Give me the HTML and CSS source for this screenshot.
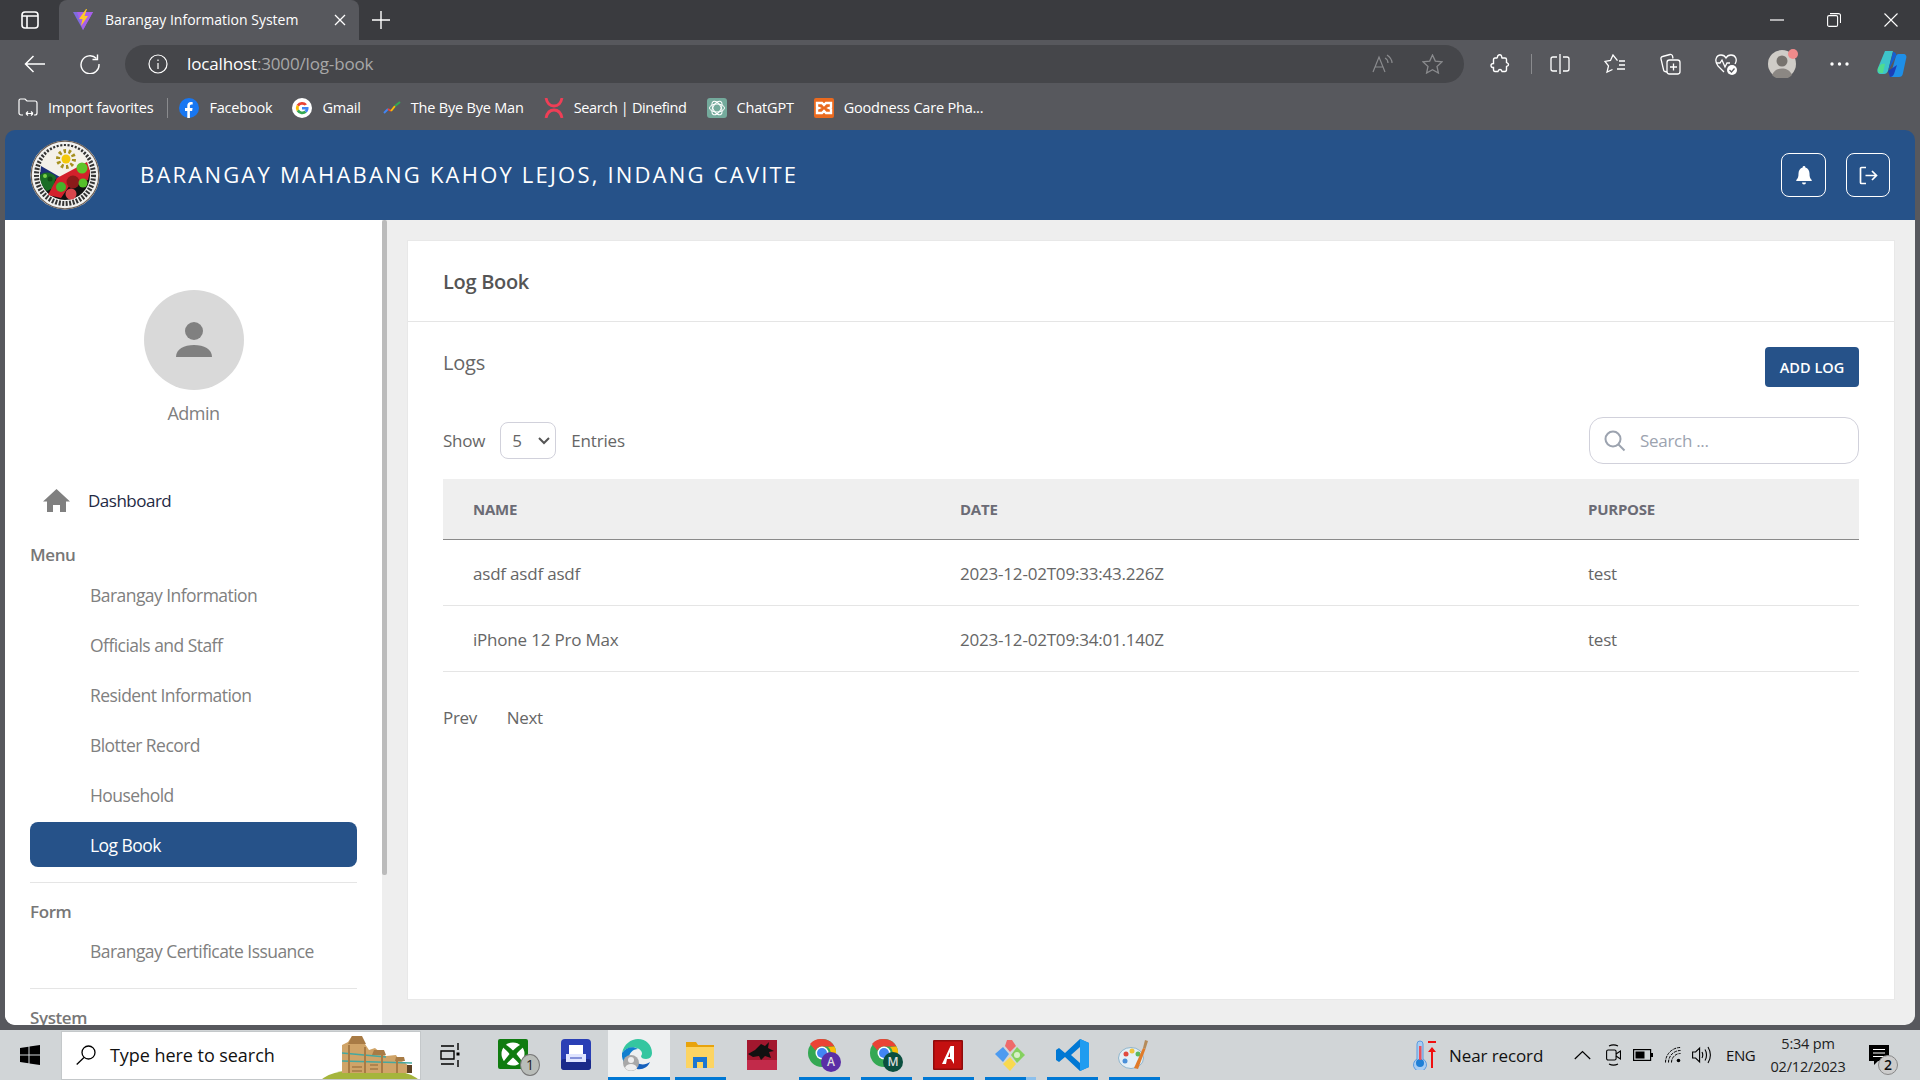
FILE: index.html
```html
<!DOCTYPE html>
<html lang="en">
<head>
<meta charset="utf-8">
<title>Barangay Information System</title>
<link rel="stylesheet" href="styles.css">
</head>
<body>
<div class="screen">
  <div class="browser">
    <div class="tabbar">
      <svg class="tab-side" width="18" height="18" viewBox="0 0 18 18" fill="none" stroke="#fff" stroke-width="1.6"><rect x="1" y="1" width="16" height="16" rx="3"/><path d="M1 5h16M6 5v12"/></svg>
      <div class="tab">
        <svg width="20" height="22" viewBox="0 0 20 22"><path d="M0 3h20L10 21z" fill="#7f6be0"/><path d="M4 3h16L10 21z" fill="#a95fe8"/><path d="M13 0L6 10h3.500L8 17l7-10h-3.500L14 0z" fill="#ffc828"/></svg>
        <span class="tab-title">Barangay Information System</span>
        <svg class="tab-x" width="12" height="12" viewBox="0 0 12 12" stroke="#fff" stroke-width="1.3"><path d="M1 1l10 10M11 1L1 11"/></svg>
      </div>
      <svg class="tab-plus" width="18" height="18" viewBox="0 0 18 18" stroke="#fff" stroke-width="1.4"><path d="M9 0v18M0 9h18"/></svg>
      <div class="win">
        <svg width="14" height="14" viewBox="0 0 14 14" stroke="#fff" stroke-width="1.2"><path d="M0 7h14"/></svg>
        <svg width="14" height="14" viewBox="0 0 14 14" fill="none" stroke="#fff" stroke-width="1.1"><rect x=".6" y="2.6" width="10" height="10.8" rx="1.5"/><path d="M3 .6h8.500a2 2 0 0 1 2 2V10"/></svg>
        <svg width="14" height="14" viewBox="0 0 14 14" stroke="#fff" stroke-width="1.1"><path d="M.5.5l13 13M13.500.5l-13 13"/></svg>
      </div>
    </div>
    <div class="toolbar">
      <svg class="tb-back" width="22" height="18" viewBox="0 0 22 18" fill="none" stroke="#fff" stroke-width="1.5"><path d="M21 9H1.500M9.500 1L1.500 9l8 8"/></svg>
      <svg class="tb-reload" width="20" height="20" viewBox="0 0 20 20" fill="none" stroke="#fff" stroke-width="1.4"><path d="M16.500 4.500A9 9 0 1 0 19 10"/><path d="M17.500 .5v5h-5"/></svg>
      <div class="address">
        <svg class="addr-info" width="20" height="20" viewBox="0 0 20 20" fill="none" stroke="#fff" stroke-width="1.2"><circle cx="10" cy="10" r="9"/><path d="M10 9v6M10 5.500v1.500"/></svg>
        <span class="url"><span class="url-host">localhost</span>:3000/log-book</span>
        <svg class="addr-read" width="21" height="20" viewBox="0 0 21 20" fill="none" stroke="#8a8b8e" stroke-width="1.2"><path d="M1 18L7 3l6 15M3 13h8M13 4c2 1 3 3 3 5M15 1c3 2 5 4 5 8"/></svg>
        <svg width="21" height="20" viewBox="0 0 21 20" fill="none" stroke="#8a8b8e" stroke-width="1.3"><path d="M10.500 1l2.800 6.100 6.700.8-5 4.500 1.400 6.600-5.900-3.300L4.600 19 6 12.400 1 7.900l6.700-.8z"/></svg>
      </div>
      <div class="tools">
        <svg width="20" height="20" viewBox="0 0 20 20" fill="none" stroke="#fff" stroke-width="1.400"><path d="M8 1.500c1-1 3-1 3.500.5.300 1 .1 1.500.5 2h3c1 0 1.500.5 1.500 1.500v3c.5.500 2 .2 2 2s-1.500 1.500-2 2v3c0 1-.5 2-1.500 2h-3c-.5-.5 0-2-2-2s-1.500 1.500-2 2H5c-1 0-1.500-1-1.500-2v-2c-1 0-2.500 0-2.500-2s1.500-2 2.500-2V6c0-1 .5-2 1.500-2h2c.5 0 .3-1.500 1-2.500z"/></svg>
        <span class="tool-sep"></span>
        <svg width="20" height="20" viewBox="0 0 20 20" fill="none" stroke="#fff" stroke-width="1.300"><path d="M10 0v20M7 3H3a2 2 0 0 0-2 2v10a2 2 0 0 0 2 2h4M13 3h4a2 2 0 0 1 2 2v10a2 2 0 0 1-2 2h-4"/></svg>
        <svg width="22" height="20" viewBox="0 0 22 20" fill="none" stroke="#fff" stroke-width="1.300"><path d="M13.500 6.600L9 1 6.500 6.500 1 7.400l3.500 4.400L3 18l5.500-2.500M15 7h6M15 11h6M13 15h8"/></svg>
        <svg width="21" height="22" viewBox="0 0 21 22" fill="none" stroke="#fff" stroke-width="1.300"><path d="M7 19l-2-.5a2 2 0 0 1-1.500-2L1 6a2 2 0 0 1 1.500-2.500L10 1.500a2 2 0 0 1 2.500 1.500l.5 2.500"/><rect x="7" y="7" width="13" height="14" rx="2.500"/><path d="M13.500 10.500v7M10 14h7"/></svg>
        <svg width="22" height="22" viewBox="0 0 22 22" fill="none" stroke="#fff" stroke-width="1.300"><path d="M3 13C-1 8 1 2 6 2c2 0 4 1 5 3 1-2 3-3 5-3 5 0 6.500 5 4 9M3 13l6 6"/><path d="M1 10h4l2-3 3 7 2-4h3"/><circle cx="17" cy="17" r="5" fill="#fff" stroke="none"/><path d="M14.500 17l2 2 3-3.500" stroke="#57585d"/></svg>
        <div class="tool-avatar"><svg width="28" height="28" viewBox="0 0 28 28"><circle cx="14" cy="14" r="14" fill="#cfccc7"/><circle cx="14" cy="11" r="5.500" fill="#77736e"/><path d="M4 25c2-5 6-6.500 10-6.500S22 20 24 25a14 14 0 0 1-20 0z" fill="#8b8783"/></svg><span class="tool-dot"></span></div>
        <svg width="19" height="4" viewBox="0 0 19 4" fill="#fff"><circle cx="2" cy="2" r="1.700"/><circle cx="9.500" cy="2" r="1.700"/><circle cx="17" cy="2" r="1.700"/></svg>
        <svg class="copilot" width="30" height="28" viewBox="0 0 30 28"><path d="M8 1h8l-5 20c-1 2-2 3-4 3H4C1 24 0 22 .5 19z" fill="#3ec4c9"/><path d="M2 17c1-3 4-4 6-3l-2 9H4c-3 0-4-3-2-6z" fill="#4fdc8f"/><path d="M22 27h-9l6-21c1-2 2-2 4-2h3c3 0 4 2 3 5l-3 14c-.5 3-2 4-4 4z" fill="#1e8fe8"/><path d="M11 21l8-15c1-2-1-4-3-4l-5 19z" fill="#155fd0"/><path d="M13 27c2 0 3-1 4-3l3-9-9 6z" fill="#1b3fb8"/></svg>
      </div>
    </div>
    <div class="bookmarks">
      <div class="bm"><svg width="20" height="19" viewBox="0 0 20 19" fill="none" stroke="#fff" stroke-width="1.200"><path d="M5 17H3a2 2 0 0 1-2-2V2.500A1.500 1.500 0 0 1 2.500 1H7l2 2h8a2 2 0 0 1 2 2v10a2 2 0 0 1-2 2h-1M8 15.500h7M8 15.500l2-2M8 15.500l2 2M15 15.500l-2-2M15 15.500l-2 2"/></svg><span>Import favorites</span></div>
      <span class="bm-sep"></span>
      <div class="bm"><svg width="20" height="20" viewBox="0 0 20 20"><circle cx="10" cy="10" r="10" fill="#1877f2"/><path d="M8.300 20v-7H6v-3h2.300V7.800c0-2.500 1.400-3.800 3.600-3.800.9 0 1.800.2 1.800.2v2.400h-1.200c-1.200 0-1.600.8-1.600 1.500V10h2.700l-.5 3h-2.200v7z" fill="#fff"/></svg><span>Facebook</span></div>
      <div class="bm"><svg width="20" height="20" viewBox="0 0 20 20"><circle cx="10" cy="10" r="10" fill="#fff"/><path d="M15 6.200A6.500 6.500 0 0 0 4.700 6.800L7 8.600a3.700 3.700 0 0 1 5.700-1z" fill="#ea4335"/><path d="M4.700 6.800a6.500 6.500 0 0 0 0 6.400L7 11.400a3.700 3.700 0 0 1 0-2.800z" fill="#fbbc05"/><path d="M4.700 13.200a6.500 6.500 0 0 0 10 1.300l-2.200-1.700A3.700 3.700 0 0 1 7 11.400z" fill="#34a853"/><path d="M16.500 9H10v2.600h3.600a3 3 0 0 1-1.100 1.200l2.200 1.700C16 13.300 16.800 11.300 16.500 9z" fill="#4285f4"/></svg><span>Gmail</span></div>
      <div class="bm bm-trend"><svg width="18" height="16" viewBox="0 0 18 16" fill="none" stroke-width="2"><path d="M1 13l4-4" stroke="#4285f4"/><path d="M5 9l3 2" stroke="#ea4335"/><path d="M8 11l4-5" stroke="#fbbc05"/><path d="M12 6l5-4" stroke="#34a853"/></svg><span>The Bye Bye Man</span></div>
      <div class="bm"><svg width="20" height="20" viewBox="0 0 20 20" fill="none" stroke="#f03e56" stroke-width="2.800"><path d="M2 0c1 5 4 8 8 8s7-3 8-8M2 20c1-5 4-8 8-8s7 3 8 8"/></svg><span class="bm-tight">Search | Dinefind</span></div>
      <div class="bm"><svg width="20" height="20" viewBox="0 0 20 20"><rect width="20" height="20" rx="3" fill="#74aa9c"/><g fill="none" stroke="#fff" stroke-width="1"><ellipse cx="10" cy="10" rx="7.500" ry="4"/><ellipse cx="10" cy="10" rx="7.500" ry="4" transform="rotate(60 10 10)"/><ellipse cx="10" cy="10" rx="7.500" ry="4" transform="rotate(120 10 10)"/></g></svg><span>ChatGPT</span></div>
      <div class="bm"><svg width="20" height="20" viewBox="0 0 20 20"><rect width="20" height="20" rx="2" fill="#ea6a1f"/><path d="M3 5h5l2 2 2-2h5v4l-2 1 2 1v4h-5l-2-2-2 2H3v-4l2-1-2-1z" fill="none" stroke="#fff" stroke-width="2.400"/></svg><span>Goodness Care Pha...</span></div>
    </div>
  </div>

  <div class="page">
    <header class="topbar">
      <svg class="logo" width="70" height="70" viewBox="0 0 70 70">
        <circle cx="35" cy="35" r="34.500" fill="#f2f2f0"/>
        <circle cx="35" cy="35" r="33.800" fill="none" stroke="#6d5f55" stroke-width="1.200"/>
        <circle cx="35" cy="35" r="28.500" fill="none" stroke="#333" stroke-width="5" stroke-dasharray="2 1.500"/>
        <circle cx="35" cy="35" r="25" fill="#111"/>
        <path d="M10 32A25 25 0 0 1 60 30L30 40l-8-6z" fill="#f4f1ea"/>
        <path d="M11 26l19 11-9 4.500-11-4z" fill="#1d2f78"/>
        <path d="M10 35c5-4 12-3 16 2l-3 11-6 3c-5-4-7-10-7-16z" fill="#1a6d24"/>
        <path d="M18 55l9-17 30-16 3 9-2 9-18 5-9 13z" fill="#d3202b"/>
        <circle cx="36" cy="19" r="4.500" fill="#f4c90b"/>
        <circle cx="36" cy="19" r="8" fill="none" stroke="#a5901f" stroke-width="4" stroke-dasharray="2.500 2.500"/>
        <circle cx="52" cy="28" r="5.500" fill="#5fc42b"/>
        <circle cx="43" cy="42" r="6.500" fill="#8b1a1a"/>
        <circle cx="31" cy="47" r="5" fill="#45b52a"/>
        <circle cx="53" cy="43" r="4.500" fill="#55c02a"/>
        <circle cx="41" cy="54" r="5.500" fill="#d8454c"/>
        <circle cx="20" cy="39" r="2.500" fill="#0f4a16"/>
        <circle cx="15" cy="36" r="2" fill="#7bd04a"/>
      </svg>
      <h1 class="brand">BARANGAY MAHABANG KAHOY LEJOS, INDANG CAVITE</h1>
      <div class="top-actions">
        <button class="icon-btn"><svg width="16" height="19" viewBox="0 0 16 19" fill="#fff"><path d="M8 0a1.300 1.300 0 0 1 1.300 1.500C12 2.200 13.500 4.500 13.500 7.500c0 3.500.6 5 2.200 6.500v1H.3v-1c1.600-1.500 2.200-3 2.200-6.500 0-3 1.500-5.300 4.200-6A1.300 1.300 0 0 1 8 0zM6 16.500h4a2 2 0 0 1-4 0z"/></svg></button>
        <button class="icon-btn icon-btn-out"><svg width="19" height="19" viewBox="0 0 19 19" fill="none" stroke="#fff" stroke-width="1.700"><path d="M7 1.500H2.500a1 1 0 0 0-1 1v14a1 1 0 0 0 1 1H7M6.500 9.500h11M13 5l4.500 4.500L13 14"/></svg></button>
      </div>
    </header>
    <div class="workspace">
      <aside class="sidebar">
        <div class="side-scroll">
          <div class="profile">
            <div class="avatar"><svg width="36" height="36" viewBox="0 0 36 36" fill="#808080"><circle cx="18" cy="9" r="9"/><path d="M0 35c0-8 8-12 18-12s18 4 18 12z"/></svg></div>
            <div class="admin">Admin</div>
          </div>
          <a class="dash"><svg width="27" height="23" viewBox="0 0 27 23" fill="#808080"><path d="M13.500 0L27 12.500h-4V23h-6v-7h-7v7H4V12.500H0z"/></svg><span>Dashboard</span></a>
          <div class="sec-label">Menu</div>
          <ul class="side-list">
            <li class="side-item">Barangay Information</li>
            <li class="side-item">Officials and Staff</li>
            <li class="side-item">Resident Information</li>
            <li class="side-item">Blotter Record</li>
            <li class="side-item">Household</li>
            <li class="side-item side-item-active">Log Book</li>
          </ul>
          <hr class="side-rule">
          <div class="sec-label">Form</div>
          <ul class="side-list">
            <li class="side-item side-item-up">Barangay Certificate Issuance</li>
          </ul>
          <hr class="side-rule side-rule-tight">
          <div class="sec-label">System</div>
        </div>
        <div class="scrollbar"><span class="scroll-thumb"></span></div>
      </aside>
      <main class="main">
        <section class="card">
          <div class="card-head"><h2 class="card-title">Log Book</h2></div>
          <div class="card-body">
            <div class="logs-row">
              <h3 class="logs-title">Logs</h3>
              <button class="add-btn">ADD LOG</button>
            </div>
            <div class="filter-row">
              <div class="entries">
                <span>Show</span>
                <div class="select"><span>5</span><svg width="12" height="8" viewBox="0 0 12 8" fill="none" stroke="#555" stroke-width="2"><path d="M1 1l5 5 5-5"/></svg></div>
                <span>Entries</span>
              </div>
              <div class="search">
                <svg width="22" height="22" viewBox="0 0 22 22" fill="none" stroke="#9ca3af" stroke-width="2"><circle cx="9" cy="9" r="7.500"/><path d="M14.500 14.500l6 6"/></svg>
                <span>Search ...</span>
              </div>
            </div>
            <table class="logs">
              <thead><tr><th class="col-name">NAME</th><th class="col-date">DATE</th><th>PURPOSE</th></tr></thead>
              <tbody>
                <tr><td>asdf asdf asdf</td><td>2023-12-02T09:33:43.226Z</td><td>test</td></tr>
                <tr><td>iPhone 12 Pro Max</td><td>2023-12-02T09:34:01.140Z</td><td>test</td></tr>
              </tbody>
            </table>
            <div class="pager"><span>Prev</span><span>Next</span></div>
          </div>
        </section>
      </main>
    </div>
  </div>

  <footer class="taskbar">
    <svg class="start" width="20" height="20" viewBox="0 0 20 20" fill="#000"><path d="M0 3l8.500-1.200v7.700H0zM9.500 1.600L20 0v9.500H9.500zM0 10.500h8.500v7.700L0 17zM9.500 10.500H20V20L9.500 18.400z"/></svg>
    <div class="task-search">
      <svg class="glass" width="20" height="20" viewBox="0 0 20 20" fill="none" stroke="#000" stroke-width="1.300"><circle cx="12.500" cy="7.500" r="6.500"/><path d="M8 12.500L.7 19.500"/></svg>
      <span class="task-search-text">Type here to search</span>
      <svg class="scene" width="98" height="48" viewBox="0 0 98 48">
        <ellipse cx="48" cy="52" rx="50" ry="14" fill="#a5b53c"/>
        <path d="M20 42V14l6-3 4-6 10 2 3 6 4 6 6-2 6 5 5 3 10-1 3 5 5 2 6 5v6z" fill="#d0a468"/>
        <path d="M30 5h10l4 8H26zM52 19h10l2 5H50zM74 26h8l1 4H73z" fill="#a87b45"/>
        <path d="M20 22l44 4M20 30l70 2" stroke="#45a8a0" stroke-width="1.500"/>
        <path d="M27 14v28M43 16v26M60 24v18M75 30v12" stroke="#a87b45" stroke-width="2"/>
        <path d="M30 36h10M30 40h10M48 34h8M48 38h8" stroke="#8e6534"/>
        <rect x="85" y="34" width="5" height="8" fill="#5e4224"/>
      </svg>
    </div>
    <svg class="taskview" width="20" height="26" viewBox="0 0 20 26" fill="none" stroke="#000" stroke-width="1.400"><path d="M1 4h13M1 22h13M1 9h13v8H1zM18 1v7M18 18v7"/><rect x="16.500" y="10.500" width="3" height="3" fill="#000" stroke="none"/></svg>
    <div class="apps">
      <div class="app"><svg width="32" height="32" viewBox="0 0 32 32"><rect width="30" height="30" rx="2" fill="#107c10"/><circle cx="15" cy="15" r="11.500" fill="#fff"/><path d="M15 11.500C12.500 9 9.500 6.500 7 5.500l-2.500 2.500C7 10 10 13 11.500 15 9 18 6 22 4 25l3 2c2.500-3 5-6 8-8.500 3 2.500 5.500 5.500 8 8.500l3-2c-2-3-5-7-7.500-10 1.500-2 4.500-5 7-7L23 5.500c-2.500 1-5.500 3.500-8 6z" fill="#107c10"/></svg><span class="bubble">1</span></div>
      <div class="app"><svg width="30" height="32" viewBox="0 0 30 32"><rect width="30" height="31" rx="4" fill="#2a3fb5"/><rect y="20" width="30" height="11" rx="3" fill="#1a2a8a"/><path d="M8 6h14v9H8z" fill="#fff"/><path d="M5 15h20v8H5z" fill="#dfe4ff"/><path d="M9 19h12" stroke="#2a3fb5"/></svg></div>
      <div class="app app-active on"><svg width="31" height="32" viewBox="0 0 31 32"><path d="M1 14C3 5 10 0 17 0c8 0 14 6 14 14 0 3-2 6-6 6-3 0-5-1-5-3 2-2 1-5-2-7-6-3-14-1-17 4z" fill="#34c6a0"/><path d="M1 14C5 8 12 7 17 10c-5 0-9 4-9 9 0 5 3 9 8 11C8 31 0 24 1 14z" fill="#0f7fcf"/><path d="M16 30c6 1 11-2 13-7-4 3-9 3-13 1z" fill="#1560bd"/><circle cx="10" cy="24" r="8" fill="#a8a8a8"/><circle cx="10" cy="21" r="3" fill="#eee"/><path d="M4 29c1-3 3-4 6-4s5 1 6 4a8 8 0 0 1-12 0z" fill="#eee"/></svg></div>
      <div class="app on"><svg width="28" height="30" viewBox="0 0 28 30"><path d="M0 2h10l2 3h16v4H0z" fill="#e8a30c"/><path d="M0 7h28v21H0z" fill="#fcd462"/><path d="M7 28V17h14v11h-4v-6h-6v6z" fill="#1b76d2"/></svg></div>
      <div class="app"><svg width="30" height="30" viewBox="0 0 30 30"><rect width="30" height="30" fill="#a3172e"/><rect y="20" width="30" height="10" fill="#c22a4a"/><path d="M1 14l7-4 6-6 4 2 4-4-1 6 6 3-5 1 2 6-6-2-4 4-2-4-6 1z" fill="#111"/></svg></div>
      <div class="app on"><svg width="32" height="34" viewBox="0 0 32 34"><circle cx="14" cy="15" r="14" fill="#34a853"/><path d="M14 1a14 14 0 0 1 12.500 7.500H14a7 7 0 0 0-6.500 4L2 6A14 14 0 0 1 14 1z" fill="#ea4335"/><path d="M26.500 8.500A14 14 0 0 1 15 29l6-10a7 7 0 0 0-1-10z" fill="#fbbc05"/><circle cx="14" cy="15" r="6.500" fill="#fff"/><circle cx="14" cy="15" r="5" fill="#4285f4"/></svg><span class="letter letter-a">A</span></div>
      <div class="app on"><svg width="32" height="34" viewBox="0 0 32 34"><circle cx="14" cy="15" r="14" fill="#34a853"/><path d="M14 1a14 14 0 0 1 12.500 7.500H14a7 7 0 0 0-6.500 4L2 6A14 14 0 0 1 14 1z" fill="#ea4335"/><path d="M26.500 8.500A14 14 0 0 1 15 29l6-10a7 7 0 0 0-1-10z" fill="#fbbc05"/><circle cx="14" cy="15" r="6.500" fill="#fff"/><circle cx="14" cy="15" r="5" fill="#4285f4"/></svg><span class="letter letter-m">M</span></div>
      <div class="app on"><svg width="30" height="30" viewBox="0 0 30 30"><rect width="30" height="30" rx="1" fill="#8f0b0b"/><rect x="1.500" y="1.500" width="27" height="27" fill="#c41010"/><path d="M17.500 6h3.500v18l-3-5h-4l-1 5H9z" fill="#fff"/><path d="M17 12l-2 5h2z" fill="#c41010"/></svg></div>
      <div class="app app-half on"><svg width="32" height="32" viewBox="0 0 32 32"><path d="M13 1l5 0 4 6-6 6-5-6z" fill="#ef6a6a"/><path d="M9 8l6 7-6 8-8-8z" fill="#4d9bf0"/><path d="M23 8l8 8-8 8-6-8z" fill="#85d15f"/><path d="M16 18l6 7-6 7-7-7z" fill="#f8d94f"/><circle cx="23" cy="16" r="3" fill="#d8f0c8"/></svg></div>
      <div class="app on"><svg width="33" height="32" viewBox="0 0 33 32"><path d="M24 0l9 4v24l-9 4L9 18 3 23l-3-2v-10l3-2 6 5z" fill="#0078d4"/><path d="M24 8l-9 8 9 8z" fill="#d0d4d6"/><path d="M24 0l9 4v24l-9 4z" fill="#1f9cf0"/></svg></div>
      <div class="app on"><svg width="32" height="32" viewBox="0 0 32 32"><ellipse cx="13" cy="19" rx="12.500" ry="10.500" fill="#e4eff6" stroke="#8fb5cc"/><circle cx="8" cy="15" r="2.500" fill="#e04a3f"/><circle cx="14" cy="12" r="2.500" fill="#f0c33c"/><circle cx="20" cy="15" r="2.500" fill="#5cb85c"/><circle cx="7" cy="22" r="2.500" fill="#4a90d9"/><path d="M16 29l9-20 2.500 1L20 30z" fill="#e07b2a"/><path d="M25 9l2-8 3 1-2.500 8z" fill="#b58b5a"/></svg></div>
    </div>
    <div class="tray">
      <svg class="thermo" width="24" height="30" viewBox="0 0 24 30"><path d="M5 2a3 3 0 0 1 6 0v15a6.500 6.500 0 1 1-6 0z" transform="translate(0 2)" fill="#a9cdf2" stroke="#5a9be0"/><circle cx="8" cy="23" r="4" fill="#1e7fd6"/><rect x="7" y="6" width="2.500" height="14" fill="#e8505b"/><path d="M16 2h8" stroke="#f01010" stroke-width="2"/><path d="M20 7l4 5h-3v16h-2V12h-3z" fill="#f01010"/></svg>
      <span class="weather">Near record</span>
      <svg class="chev" width="17" height="10" viewBox="0 0 17 10" fill="none" stroke="#000" stroke-width="1.200"><path d="M.8 9L8.500 1.500 16.200 9"/></svg>
      <svg class="cam" width="15" height="22" viewBox="0 0 15 22" fill="none" stroke="#000" stroke-width="1.100"><path d="M3 2c3-1.500 6-1.500 9 0M3 20c3 1.500 6 1.500 9 0"/><rect x=".6" y="6" width="9.500" height="10" rx="1.500"/><path d="M10 10l4.500-3v8L10 12"/></svg>
      <svg class="batt" width="20" height="12" viewBox="0 0 20 12"><rect x=".6" y=".6" width="17" height="10.800" fill="none" stroke="#000" stroke-width="1.200"/><rect x="2.500" y="2.500" width="9" height="7"/><rect x="18" y="4" width="2" height="4"/></svg>
      <svg class="wifi" width="16" height="16" viewBox="0 0 16 16" fill="none" stroke="#000" stroke-width="1"><path d="M.5 15.500A15 15 0 0 1 15.500 .5M3.500 15.500A12 12 0 0 1 15.500 3.500M6.500 15.500A9 9 0 0 1 15.500 6.500" stroke-dasharray="3 1"/><circle cx="13.500" cy="13.500" r="1.800" fill="#000" stroke="none"/></svg>
      <svg class="vol" width="20" height="18" viewBox="0 0 20 18" fill="none" stroke="#000" stroke-width="1.100"><path d="M.6 6v6h3l4 4V2l-4 4zM10 6c1 2 1 4 0 6M13 3.500c2 3 2 8 0 11M16 1c3 5 3 11 0 16"/></svg>
      <span class="lang">ENG</span>
      <div class="clock"><span>5:34 pm</span><span>02/12/2023</span></div>
      <div class="notif"><svg width="20" height="21" viewBox="0 0 20 21"><path d="M0 0h20v16H9l-4 4v-4H0z"/><path d="M4 4.500h12M4 8h12M4 11.500h12" stroke="#fff" stroke-width="1"/></svg><span class="notif-badge">2</span></div>
    </div>
  </footer>
</div>
</body>
</html>
```
FILE: styles.css
```css
* { box-sizing: border-box; }
html, body { margin: 0; height: 100%; overflow: hidden; }
body { font-family: "Open Sans", "Noto Sans", "Liberation Sans", sans-serif; color: #666; }
svg { display: block; flex: none; }
h1, h2, h3, ul { margin: 0; padding: 0; font-weight: 400; }
ul { list-style: none; }

.screen { width: 1920px; height: 1080px; display: flex; flex-direction: column; }

/* browser chrome */
.browser { height: 130px; flex: none; background: #57585d; color: #fff; }
.tabbar { height: 40px; background: #3a3b3f; display: flex; align-items: center; padding-left: 21px; }
.tab { width: 300px; height: 40px; margin-left: 20px; padding-left: 14px; background: #57585d; border-radius: 8px 8px 0 0; display: flex; align-items: center; }
.tab-title { margin: -2px 0 0 12px; font-size: 14px; width: 228px; white-space: nowrap; }
.tab-x { margin-left: 1px; }
.tab-plus { margin-left: 13px; }
.win { margin-left: auto; display: flex; gap: 43px; padding-right: 22px; }
.toolbar { height: 43px; display: flex; align-items: flex-end; padding-left: 24px; }
.tb-back { margin-bottom: 10px; }
.tb-reload { margin-left: 34px; margin-bottom: 9px; }
.address { width: 1339px; height: 38px; margin-left: 25px; background: #45464a; border-radius: 19px; display: flex; align-items: center; padding: 0 21px 0 23px; }
.url { margin: -2px 0 0 19px; font-size: 17px; letter-spacing: -.15px; color: #a8a8a8; flex: 1; }
.url-host { color: #fff; }
.addr-read { margin-right: 29px; }
.tools { display: flex; align-items: center; height: 38px; margin-left: 26px; gap: 34px; }
.tools .tool-sep { width: 1px; height: 20px; background: #8a8b8e; margin: 0 -16px 0 -13px; }
.tool-avatar { position: relative; margin-left: -3px; }
.tool-dot { position: absolute; top: -1px; right: -2px; width: 10px; height: 10px; border-radius: 50%; background: #f08a8a; }
.copilot { margin-left: -6px; }
.bookmarks { height: 47px; display: flex; align-items: center; padding: 2px 0 0 18px; gap: 20px; font-size: 14.500px; letter-spacing: -.2px; }
.bm { display: flex; align-items: center; gap: 10px; white-space: nowrap; }
.bm-trend { margin-left: 2px; }
.bm-tight { letter-spacing: -.35px; }
.bm-sep { width: 1px; height: 20px; background: #8a8b8e; margin: 0 -9px 0 -6px; }

/* page frame */
.page { height: 900px; flex: none; background: #57585d; padding: 0 5px 5px; display: flex; flex-direction: column; overflow: hidden; }
.topbar { height: 90px; flex: none; background: #265289; border-radius: 10px 10px 0 0; display: flex; align-items: center; padding: 0 25px; color: #fff; }
.brand { margin: -2px 0 0 40px; font-size: 22px; letter-spacing: 2.2px; white-space: nowrap; }
.top-actions { margin-left: auto; display: flex; gap: 20px; }
.icon-btn { width: 45px; height: 44px; background: transparent; border: 1px solid #fff; border-radius: 8px; display: flex; align-items: center; justify-content: center; padding: 0; }
.icon-btn-out { width: 44px; }

.workspace { flex: 1; min-height: 0; display: flex; background: #eee; border-radius: 0 0 10px 10px; overflow: hidden; }
.sidebar { width: 382px; flex: none; display: flex; background: #fff; overflow: hidden; }
.side-scroll { width: 377px; flex: none; padding: 0 25px; overflow: hidden; }
.scrollbar { width: 5px; flex: none; background: #eee; }
.scroll-thumb { display: block; height: 655px; background: #bbb; border-radius: 2px; }

.profile { height: 256px; padding-top: 70px; display: flex; flex-direction: column; align-items: center; }
.avatar { width: 100px; height: 100px; border-radius: 50%; background: #d9d9d9; display: flex; align-items: center; justify-content: center; }
.admin { margin-top: 10px; font-size: 18px; line-height: 26px; color: #808080; letter-spacing: -.5px; }
.dash { height: 50px; display: flex; align-items: center; padding: 0 0 2px 13px; gap: 18px; color: #1f2a44; font-size: 17px; letter-spacing: -.5px; }
.sec-label { margin-top: 14px; height: 29px; line-height: 29px; font-size: 17px; font-weight: 600; color: #777; letter-spacing: -.4px; }
.side-list { margin-top: 3px; display: flex; flex-direction: column; gap: 5px; }
.side-item { height: 45px; line-height: 47px; padding-left: 60px; border-radius: 8px; font-size: 17.500px; letter-spacing: -.55px; color: #808080; white-space: nowrap; }
.side-item-up { line-height: 45px; }
.side-item-active { background: #265289; color: #fff; }
.side-rule { margin: 15px 0 0; border: 0; border-top: 1px solid #e5e5e5; }
.side-rule-tight { margin-top: 14px; }

/* main */
.main { flex: 1; min-width: 0; padding: 20px 20px 25px; }
.card { height: 100%; background: #fff; border: 1px solid #e8e8e8; display: flex; flex-direction: column; }
.card-head { height: 81px; flex: none; border-bottom: 1px solid #e5e5e5; padding: 0 35px; display: flex; align-items: center; }
.card-title { font-size: 20px; font-weight: 600; color: #555; letter-spacing: -.3px; }
.card-body { padding: 25px 35px 0; }
.logs-row { display: flex; justify-content: space-between; height: 40px; }
.logs-title { font-size: 20px; line-height: 32px; color: #666; letter-spacing: -.2px; }
.add-btn { width: 94px; height: 40px; border: 0; padding: 0; background: #265289; color: #fff; border-radius: 4px; font: 600 14.500px "Open Sans", sans-serif; }
.filter-row { margin-top: 30px; height: 47px; display: flex; align-items: center; justify-content: space-between; }
.entries { display: flex; align-items: center; gap: 15px; font-size: 17px; letter-spacing: -.2px; color: #666; }
.select { width: 56px; height: 37px; border: 1px solid #d1d1db; border-radius: 8px; display: flex; align-items: center; justify-content: space-between; padding: 0 5px 0 11px; }
.search { width: 270px; height: 47px; border: 1px solid #d1d1db; border-radius: 14px; display: flex; align-items: center; padding-left: 14px; gap: 14px; font-size: 17px; letter-spacing: -.3px; color: #9ca3af; }
.logs { width: 100%; margin-top: 15px; border-collapse: collapse; table-layout: fixed; }
.logs th { height: 60px; padding: 0 0 0 30px; background: #efefef; border-bottom: 1px solid #8a8a8a; text-align: left; font-size: 15px; font-weight: 700; letter-spacing: -.25px; color: #6b6b75; }
.logs td { height: 66px; padding: 2px 0 0 30px; border-bottom: 1px solid #e5e5e5; font-size: 17px; letter-spacing: -.2px; color: #666; }
.col-name { width: 487px; }
.col-date { width: 628px; }
.pager { margin-top: 31px; display: flex; gap: 30px; font-size: 17px; line-height: 30px; letter-spacing: -.35px; color: #666; }

/* taskbar */
.taskbar { height: 50px; flex: none; background: #d1d5d7; display: flex; align-items: center; position: relative; color: #111; }
.start { margin-left: 20px; }
.task-search { width: 360px; height: 49px; margin-left: 21px; background: #fff; border: 1px solid #c4c8ca; display: flex; align-items: center; padding-left: 14px; overflow: hidden; }
.task-search-text { margin-left: 14px; font-size: 18px; letter-spacing: -.05px; white-space: nowrap; color: #111; flex: 1; }
.scene { align-self: flex-end; }
.taskview { margin-left: 19px; }
.apps { margin-left: 24px; display: flex; height: 50px; }
.app { width: 62px; height: 50px; display: flex; align-items: center; justify-content: center; position: relative; }
.app svg { margin-left: -2px; }
.app-active svg { margin-left: -5px; }
.app.on::after { content: ""; position: absolute; left: 5px; right: 6px; bottom: 0; height: 3px; background: #0078d4; }
.app-active { background: #eef0f1; }
.app-active.on::after { left: 0; right: 0; }
.app-half.on::before { content: ""; position: absolute; right: 6px; bottom: 0; width: 10px; height: 3px; background: #8cc0ec; z-index: 1; }
.bubble { position: absolute; left: 36px; top: 24px; width: 20px; height: 22px; border: 1px solid #777; border-radius: 50%; background: #b9bdb9; color: #222; font-size: 14px; line-height: 20px; text-align: center; }
.letter { position: absolute; left: 27px; top: 22px; width: 20px; height: 20px; border-radius: 50%; color: #ddd; font-size: 12px; font-weight: 600; line-height: 20px; text-align: center; }
.letter-a { background: #5a2ea6; }
.letter-m { background: #0b4f3f; }
.tray { position: absolute; left: 1412px; top: 0; right: 0; height: 50px; display: flex; align-items: center; }
.weather { margin-left: 13px; font-size: 17px; letter-spacing: -.1px; width: 125px; white-space: nowrap; }
.cam { margin-left: 15px; }
.batt { margin-left: 12px; }
.wifi { margin-left: 12px; }
.vol { margin-left: 11px; }
.lang { margin-left: 14px; font-size: 15px; letter-spacing: -.4px; width: 28px; }
.clock { margin-left: 16px; width: 76px; display: flex; flex-direction: column; align-items: center; gap: 3px; font-size: 14.500px; line-height: 20px; letter-spacing: -.2px; white-space: nowrap; color: #222; }
.notif { margin-left: 23px; position: relative; }
.notif-badge { position: absolute; left: 9px; top: 10px; width: 20px; height: 20px; border: 1px solid #888; border-radius: 50%; background: #ccc; color: #111; font-size: 14px; font-weight: 600; line-height: 18px; text-align: center; }
```
